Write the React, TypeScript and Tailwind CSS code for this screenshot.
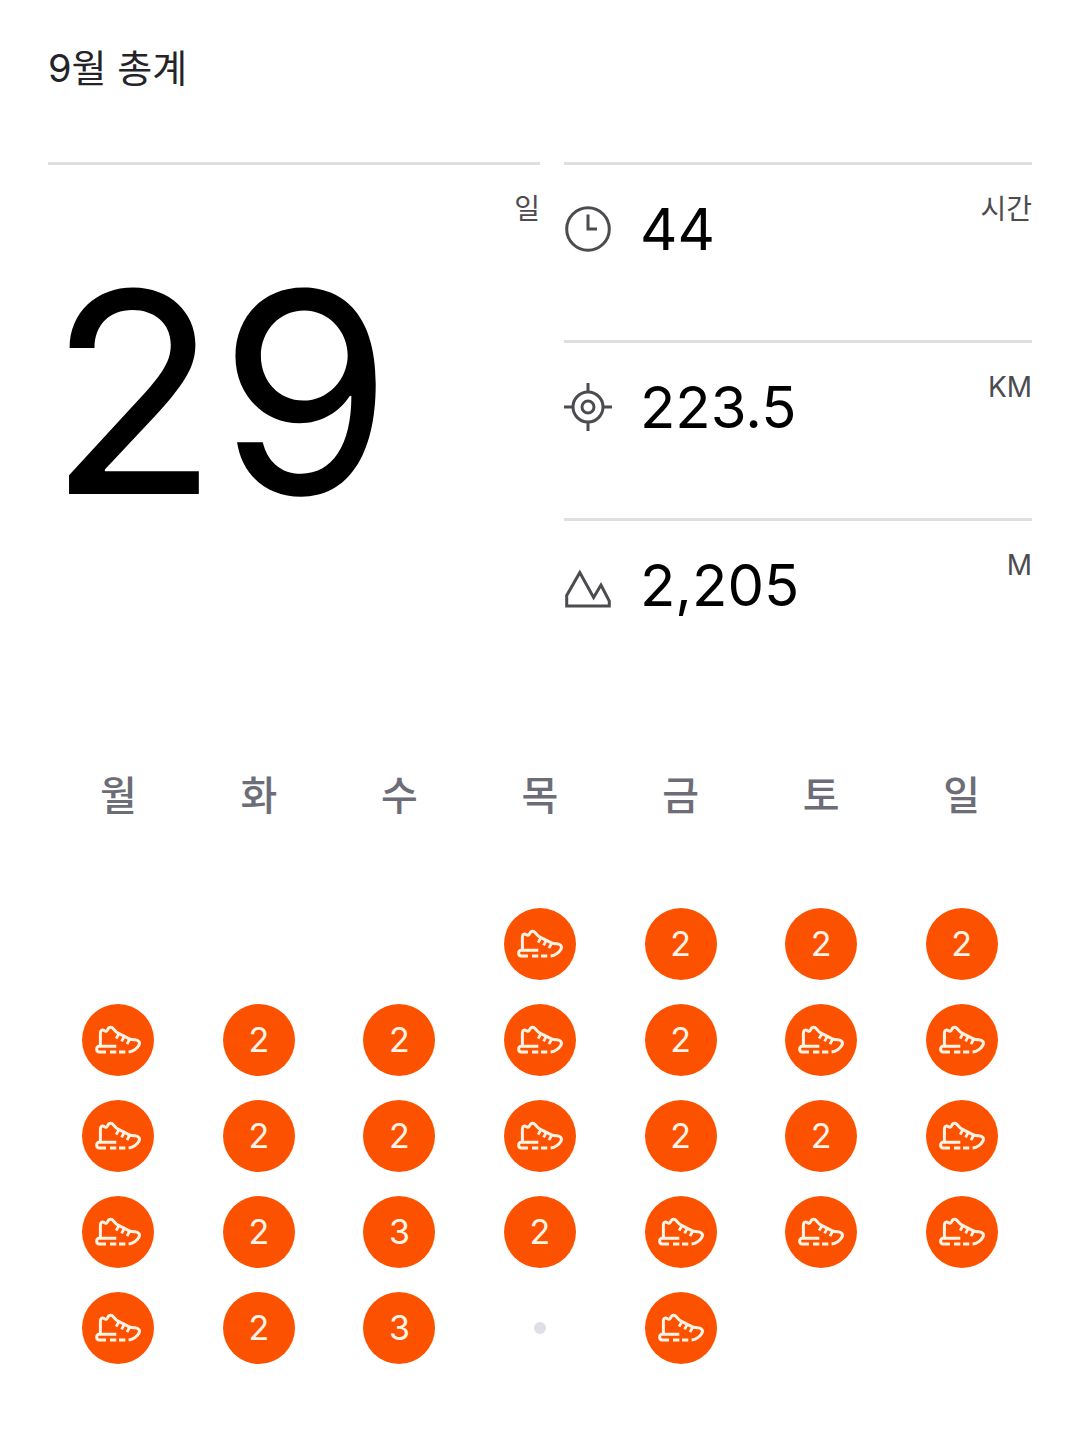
import React from "react";

const ClockIcon = () => (
  <svg viewBox="0 0 48 48" className="size-12" fill="none" stroke="currentColor" strokeWidth="3" aria-hidden="true">
    <circle cx="24" cy="24" r="21.3" />
    <path d="M24 9.5V24h9" />
  </svg>
);

const DistanceIcon = () => (
  <svg viewBox="0 0 48 48" className="size-12" fill="none" stroke="currentColor" strokeWidth="3" aria-hidden="true">
    <circle cx="24" cy="24" r="15" />
    <circle cx="24" cy="24" r="6" />
    <path d="M24 0v9M24 39v9M0 24h9M39 24h9" />
  </svg>
);

const ElevationIcon = () => (
  <svg viewBox="0 0 48 48" className="size-12" fill="none" stroke="currentColor" strokeWidth="3" aria-hidden="true">
    <path d="M2.7 45V34.5L15.8 11.5L29.6 36.5L37 24L45.3 40V45Z" />
  </svg>
);

const ShoeIcon = () => (
  <svg
    viewBox="0 0 48 48"
    className="size-12"
    fill="none"
    stroke="currentColor"
    strokeWidth="3"
    strokeLinejoin="round"
    role="img"
    aria-label="달리기"
  >
    <path d="M22.3 30.2H5.2C1.8 30.2 1.8 36 5.2 36H12" />
    <path d="M6.4 30V17.2C6.4 14.2 8.4 13.4 10.2 14.6C11.8 15.6 13 15.4 13.6 13.8C14.8 10.8 17.6 10.4 19.4 12.8C21 15 22.8 16.6 25 17.6L35.4 22.8C37 23.6 38.6 23.7 40.6 23.7C44.8 23.6 46.6 26.6 44.6 29.8C42.4 33.2 39.4 35.4 34.6 36" />
    <path strokeWidth="2.8" d="M25 17.4L22.2 22.6M30.4 20.2L27.6 25.4M35.8 23L33 28.2" />
    <path d="M16 36h6.3M25 36h6.3" />
  </svg>
);

const stats = [
  { icon: <ClockIcon />, value: "44", unit: "시간" },
  { icon: <DistanceIcon />, value: "223.5", unit: "KM" },
  { icon: <ElevationIcon />, value: "2,205", unit: "M" },
];

const weekdays = ["월", "화", "수", "목", "금", "토", "일"];

// number = several activities that day, "run" = a single one, "rest" = none
type Day = number | "run" | "rest" | null;

const weeks: Day[][] = [
  [null, null, null, "run", 2, 2, 2],
  ["run", 2, 2, "run", 2, "run", "run"],
  ["run", 2, 2, "run", 2, 2, "run"],
  ["run", 2, 3, 2, "run", "run", "run"],
  ["run", 2, 3, "rest", "run", null, null],
];

const DayCell = ({ day }: { day: Day }) => {
  if (day === null) return null;
  if (day === "rest") return <div className="mx-auto size-3 rounded-full bg-[#dfdfe8]" />;
  return (
    <div className="mx-auto flex size-[72px] items-center justify-center rounded-full bg-[#fc5200] text-[34px] leading-10 text-[#fff3e6]">
      {day === "run" ? <ShoeIcon /> : day}
    </div>
  );
};

export default function App() {
  return (
    <main className="min-h-screen bg-white px-12 pt-12 pb-14 font-['Inter','Noto_Sans_CJK_KR',sans-serif] text-black">
      <h1 className="text-[38px] leading-10 text-[#242428]">9월 총계</h1>

      <section className="mt-[74px] grid grid-cols-[41fr_39fr] gap-6">
        <div className="flex justify-between border-t-[3px] border-[#dfdfe3]">
          <p className="pt-[88px] text-[280px] leading-none">29</p>
          <span className="pt-7 text-[28px] leading-8 text-[#4c4c50]">일</span>
        </div>

        <div>
          {stats.map((stat) => (
            <div key={stat.unit} className="flex items-start justify-between border-t-[3px] border-[#dfdfe3] pb-[87px]">
              <div className="flex items-center gap-7 pt-10 text-[#4c4c50]">
                {stat.icon}
                <span className="text-[58px] leading-12 text-black">{stat.value}</span>
              </div>
              <span className="pt-7 text-[28px] leading-8 text-[#4c4c50]">{stat.unit}</span>
            </div>
          ))}
        </div>
      </section>

      <table className="mt-[76px] w-full table-fixed">
        <thead>
          <tr>
            {weekdays.map((name) => (
              <th key={name} scope="col" className="p-0 pb-[76px] text-[40px] leading-12 font-medium text-[#6d6d78]">
                {name}
              </th>
            ))}
          </tr>
        </thead>
        <tbody>
          {weeks.map((week, i) => (
            <tr key={i}>
              {week.map((day, j) => (
                <td key={j} className="px-0 py-3 align-middle">
                  <DayCell day={day} />
                </td>
              ))}
            </tr>
          ))}
        </tbody>
      </table>
    </main>
  );
}
